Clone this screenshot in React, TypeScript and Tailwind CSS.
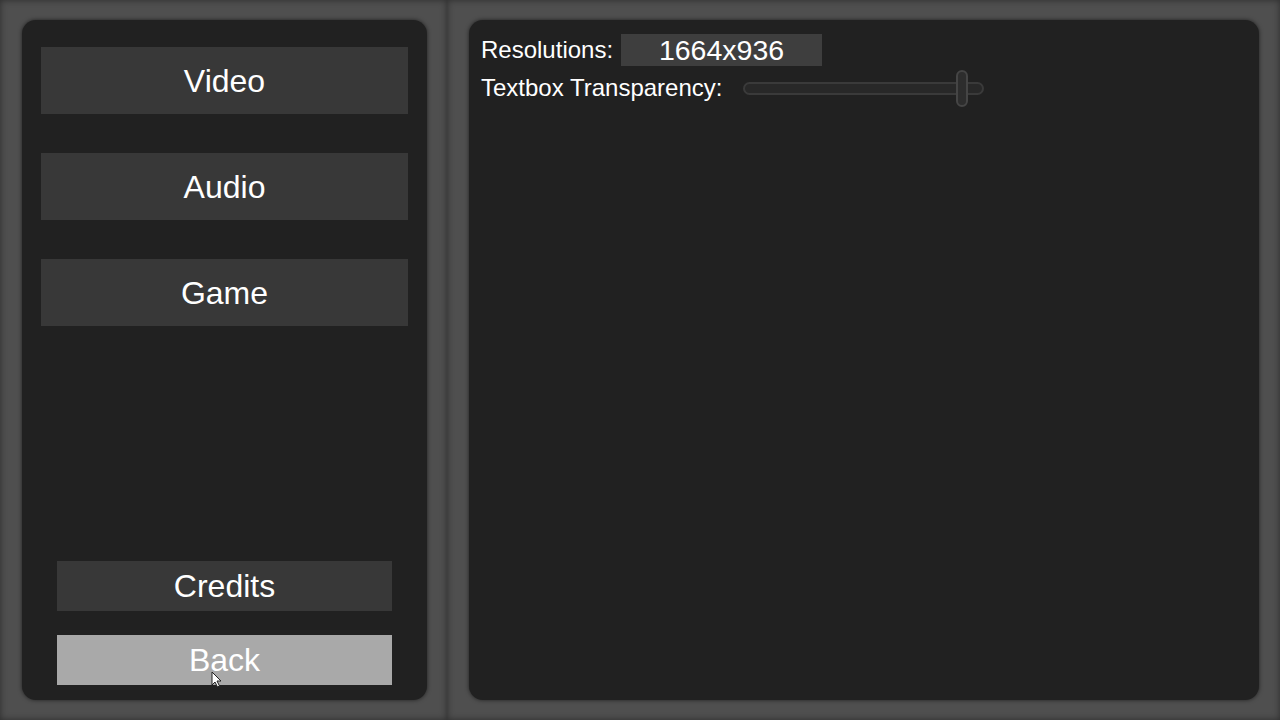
import React from 'react';

const font = { fontFamily: '"Liberation Sans", Arial, sans-serif' };

function MenuButton({ label }: { label: string }) {
  return (
    <div className="h-[67px] bg-[#383838] flex items-center justify-center text-white text-[32px]">
      {label}
    </div>
  );
}

function Cursor() {
  return (
    <svg className="absolute left-[211px] top-[671px]" width="11" height="17" viewBox="0 0 11 17">
      <path d="M1 1 L1 14 L4 11 L6.5 16 L8.5 15 L6 10 L10 10 Z" fill="#fff" stroke="#222" strokeWidth="1" />
    </svg>
  );
}

export default function App() {
  return (
    <div className="relative w-[1280px] h-[720px] bg-[#454545] flex overflow-hidden" style={font}>
      {/* left frame */}
      <div className="w-[447px] h-full bg-[#4f4f4f] shadow-[inset_0_0_7px_rgba(0,0,0,0.45)] pl-[22px] pr-[20px] py-[20px]">
        <div className="h-full rounded-[14px] bg-[#212121] shadow-[0_0_4px_rgba(0,0,0,0.6)] flex flex-col pt-[27px] pb-[15px] px-[19px]">
          <div className="flex flex-col gap-[39px]">
            <MenuButton label="Video" />
            <MenuButton label="Audio" />
            <MenuButton label="Game" />
          </div>
          <div className="mt-auto flex flex-col gap-[24px] px-[16px]">
            <div className="h-[50px] bg-[#383838] flex items-center justify-center text-white text-[32px]">
              Credits
            </div>
            <div className="h-[50px] bg-[#a9a9a9] flex items-center justify-center text-white text-[32px]">
              Back
            </div>
          </div>
        </div>
      </div>

      {/* right frame */}
      <div className="flex-1 h-full bg-[#4f4f4f] shadow-[inset_0_0_7px_rgba(0,0,0,0.45)] pl-[22px] pr-[21px] py-[20px]">
        <div className="h-full rounded-[14px] bg-[#212121] shadow-[0_0_4px_rgba(0,0,0,0.6)] pt-[14px] pl-[12px]">
          <div className="flex items-center h-[32px]">
            <span className="text-white text-[24px] w-[140px]">Resolutions:</span>
            <div className="w-[201px] h-[32px] bg-[#3e3e3e] flex items-center justify-center text-white text-[28.5px]">
              1664x936
            </div>
          </div>
          <div className="flex items-center h-[44px]">
            <span className="text-white text-[24px] w-[262px]">Textbox Transparency:</span>
            <div className="relative w-[241px] h-[13px] rounded-full bg-[#282828] border-2 border-[#3a3a3a]">
              <div className="absolute left-[211px] top-[-14px] w-[12px] h-[37px] rounded-full bg-[#2d2d2d] border-2 border-[#454545]" />
            </div>
          </div>
        </div>
      </div>

      <Cursor />
    </div>
  );
}
